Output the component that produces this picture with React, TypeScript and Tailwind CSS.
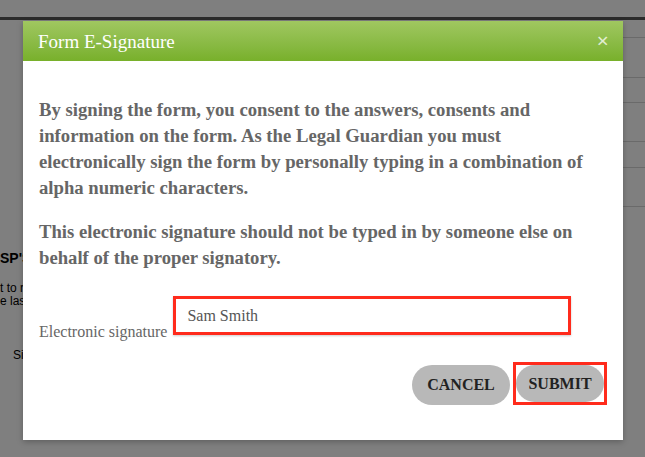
import { useState } from 'react'

const serif = { fontFamily: '"Liberation Serif", "Times New Roman", serif' }

function BackgroundPage() {
  const rows = [18, 40, 25, 39, 26, 39]
  return (
    <div className="h-[457px] w-full bg-white" style={{ fontFamily: '"Liberation Sans", Arial, sans-serif' }}>
      <div className="h-[20px] border-b-[3px] border-[#565656]" />
      <div className="flex">
        <div className="w-[23px] overflow-hidden pt-[229px] text-black">
          <p className="whitespace-nowrap text-[14px] font-bold leading-[18px]">SP'S</p>
          <p className="mt-[15px] whitespace-nowrap text-[12px] leading-[13px]">
            t to r
            <br />
            e las
          </p>
          <p className="mt-[38px] whitespace-nowrap pl-[13px] text-[12px]">Si</p>
        </div>
        <div className="ml-auto w-[320px]">
          {rows.map((h, i) => (
            <div key={i} className="border-b border-[#d4d4d4]" style={{ height: h }} />
          ))}
        </div>
      </div>
    </div>
  )
}

export default function App() {
  const [signature, setSignature] = useState('Sam Smith')

  return (
    <div className="relative h-[457px] w-[645px] overflow-hidden">
      <BackgroundPage />
      <div className="absolute inset-0 bg-black/50 pl-[23px] pt-[21px]" style={serif}>
        <div className="w-[600px] bg-white shadow-[0_2px_6px_rgba(0,0,0,0.25)]">
          <div className="flex h-[40px] items-center justify-between bg-gradient-to-b from-[#a0c760] to-[#78b02a] pl-[15px] pr-[14px]">
            <h2 className="text-[19px] leading-none text-white">Form E-Signature</h2>
            <button className="text-[22px] font-bold leading-none text-white/75">×</button>
          </div>

          <div className="pb-[35px] pl-[16px] pr-[16px] pt-[36px]">
            <div className="text-[18.7px] font-bold leading-[26px] text-[#666]">
              <p>
                By signing the form, you consent to the answers, consents and information on the form. As the Legal
                Guardian you must electronically sign the form by personally typing in a combination of alpha numeric
                characters.
              </p>
              <p className="mt-[18px]">
                This electronic signature should not be typed in by someone else on behalf of the proper signatory.
              </p>
            </div>

            <div className="mt-[25px] flex items-end gap-[6px]">
              <label className="mb-[-9px] whitespace-nowrap text-[16px] text-[#666]">Electronic signature</label>
              <input
                value={signature}
                onChange={(e) => setSignature(e.target.value)}
                style={serif}
                className="h-[39px] w-[398px] border-[3px] border-[#ff2b1c] bg-white px-[11px] text-[16px] text-[#555] shadow-[0_1px_2px_rgba(0,0,0,0.2)] outline-none"
              />
            </div>

            <div className="mt-[27px] flex items-start justify-end gap-[3px]">
              <button className="mt-[3px] h-[40px] w-[98px] rounded-full bg-[#b8b8b8] text-[16px] font-bold text-[#222]">
                CANCEL
              </button>
              <div className="h-[43px] w-[94px] border-[3px] border-[#ff2b1c]">
                <button className="h-full w-full rounded-full bg-[#b8b8b8] text-[16px] font-bold text-[#222]">
                  SUBMIT
                </button>
              </div>
            </div>
          </div>
        </div>
      </div>
    </div>
  )
}
